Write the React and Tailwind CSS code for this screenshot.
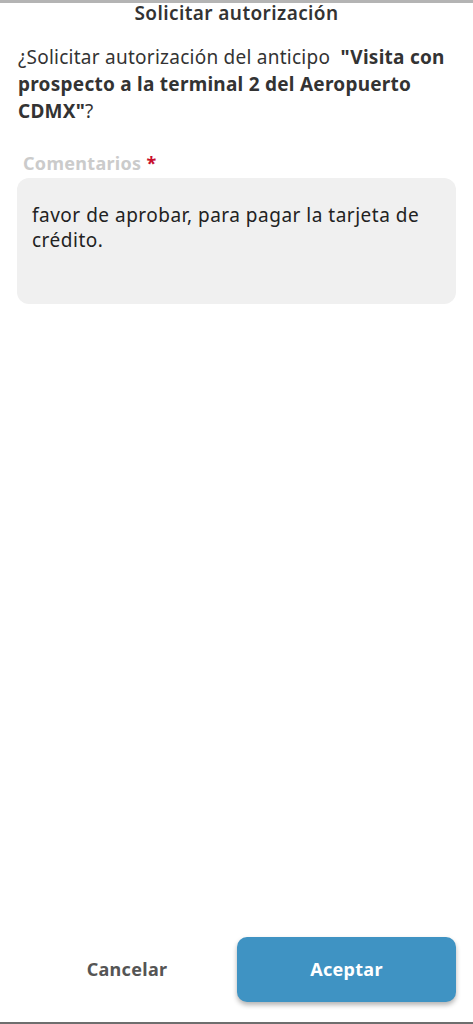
import { useState } from "react";

export default function App() {
    const [comment, setComment] = useState("favor de aprobar, para pagar la tarjeta de crédito.");

    return (
        <div
            className="w-[473px] h-[1024px] bg-white flex flex-col border-t-[3px] border-t-[#b4b4b4] border-b-[2px] border-b-[#6e6e6e]"
            style={{ fontFamily: '"Noto Sans", "Open Sans", sans-serif' }}
        >
            {/* Header */}
            <h1 className="text-center text-[19px] leading-[20px] font-semibold text-[#333333] tracking-[0.4px]">
                Solicitar autorización
            </h1>

            {/* Question */}
            <p className="px-[18px] mt-[21px] text-[19px] leading-[27px] text-[#333333] tracking-[0.25px]">
                ¿Solicitar autorización del anticipo&nbsp; <b className="font-bold">"Visita con prospecto a la terminal 2 del Aeropuerto CDMX"</b>?
            </p>

            {/* Comments */}
            <div className="px-[17px] mt-[26px]">
                <label className="block pl-[6px] text-[18px] leading-[24px] font-bold text-[#cbcbcb] tracking-[0.3px]">
                    Comentarios <span className="text-[#c8102e]">*</span>
                </label>
                <textarea
                    value={comment}
                    onChange={(e) => setComment(e.target.value)}
                    className="mt-[3px] w-full h-[126px] resize-none rounded-[12px] bg-[#f0f0f0] px-[15px] pt-[25px] text-[19px] leading-[25px] text-[#222222] tracking-[0.5px] outline-none"
                    style={{ fontFamily: '"Noto Sans", "Open Sans", sans-serif' }}
                />
            </div>

            <div className="flex-1" />

            {/* Actions */}
            <div className="flex items-center px-[17px] pb-[20px]">
                <button className="flex-1 h-[65px] text-[18px] font-bold text-[#555555] tracking-[0.3px]">Cancelar</button>
                <button className="w-[219px] h-[65px] rounded-[10px] bg-[#3f93c3] text-[18px] font-bold text-white tracking-[0.3px] shadow-[0_3px_5px_rgba(0,0,0,0.3)]">
                    Aceptar
                </button>
            </div>
        </div>
    );
}
